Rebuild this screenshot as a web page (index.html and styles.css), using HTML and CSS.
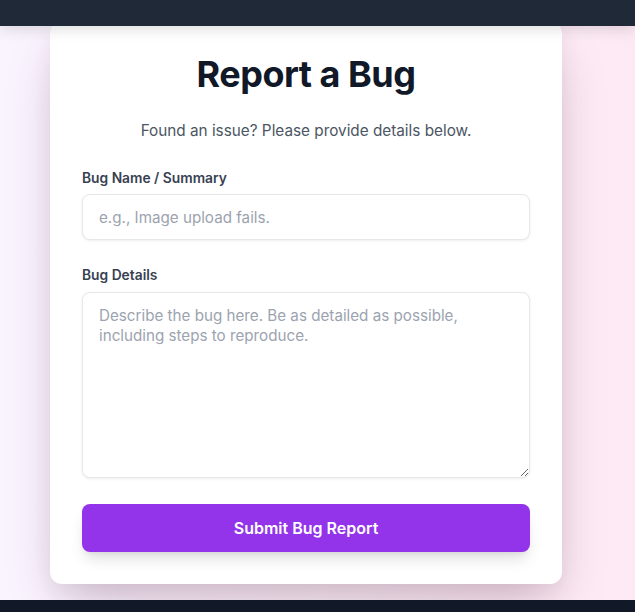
FILE: index.html
```html
<!DOCTYPE html>
<html lang="en">
<head>
<meta charset="utf-8">
<title>Report a Bug</title>
<link rel="stylesheet" href="styles.css">
</head>
<body>
<header class="topbar"></header>
<main class="page">
  <section class="card">
    <h1 class="title">Report a Bug</h1>
    <p class="subtitle">Found an issue? Please provide details below.</p>
    <form class="form">
      <div class="field">
        <label class="label" for="bug-name">Bug Name / Summary</label>
        <input class="input" id="bug-name" type="text" placeholder="e.g., Image upload fails.">
      </div>
      <div class="field field-last">
        <label class="label" for="bug-details">Bug Details</label>
        <textarea class="input textarea" id="bug-details" rows="8" placeholder="Describe the bug here. Be as detailed as possible, including steps to reproduce."></textarea>
      </div>
      <button class="submit" type="button">Submit Bug Report</button>
    </form>
  </section>
</main>
<footer class="footer"></footer>
</body>
</html>
```

FILE: styles.css
```css
* { box-sizing: border-box; }

html, body {
  margin: 0;
  padding: 0;
}

body {
  font-family: Inter, "Noto Sans", "Liberation Sans", sans-serif;
  background: linear-gradient(to right, #faf4ff 0%, #fcf1f9 50%, #fde9f4 100%);
  color: #111827;
}

.topbar {
  position: fixed;
  top: 0;
  left: 0;
  right: 0;
  height: 26px;
  background: #1f2937;
  box-shadow: 0 4px 14px rgba(0, 0, 0, 0.12);
  z-index: 10;
}

.page {
  padding: 22px 0 16px 50px;
}

.card {
  width: 512px;
  background: #ffffff;
  border-radius: 12px;
  padding: 32px 32px 32px;
  box-shadow: 0 25px 50px -12px rgba(80, 30, 60, 0.28), 0 8px 20px rgba(80, 30, 60, 0.06);
}

.title {
  margin: 0 0 25px;
  font-size: 36px;
  line-height: 40px;
  font-weight: 700;
  letter-spacing: -0.5px;
  text-align: center;
  color: #111827;
}

.subtitle {
  margin: 0 0 25px;
  font-size: 15.3px;
  line-height: 24px;
  text-align: center;
  color: #4b5563;
}

.form {
  margin: 0;
}

.field {
  margin-bottom: 25px;
}

.field-last {
  margin-bottom: 26px;
}

.label {
  display: block;
  margin-bottom: 6px;
  font-size: 13.8px;
  line-height: 20px;
  font-weight: 600;
  color: #374151;
}

.field-last .label {
  margin-bottom: 7px;
}

.input {
  display: block;
  width: 100%;
  margin: 0;
  padding: 13px 16px 11px;
  font-family: inherit;
  font-size: 15.2px;
  line-height: 20px;
  color: #111827;
  background: #ffffff;
  border: 1px solid #e5e7eb;
  border-radius: 8px;
  box-shadow: 0 1px 3px rgba(0, 0, 0, 0.07);
  outline: none;
}

.input::placeholder {
  color: #9ca3af;
}

.textarea {
  height: 186px;
  resize: vertical;
}

.submit {
  display: block;
  width: 100%;
  padding: 12px 16px;
  font-family: inherit;
  font-size: 16px;
  line-height: 24px;
  font-weight: 600;
  color: #ffffff;
  background: #9333ea;
  border: none;
  border-radius: 8px;
  box-shadow: 0 10px 15px -3px rgba(0, 0, 0, 0.12), 0 4px 6px -4px rgba(0, 0, 0, 0.1);
  cursor: pointer;
}

.footer {
  height: 60px;
  background: #111827;
}
```
